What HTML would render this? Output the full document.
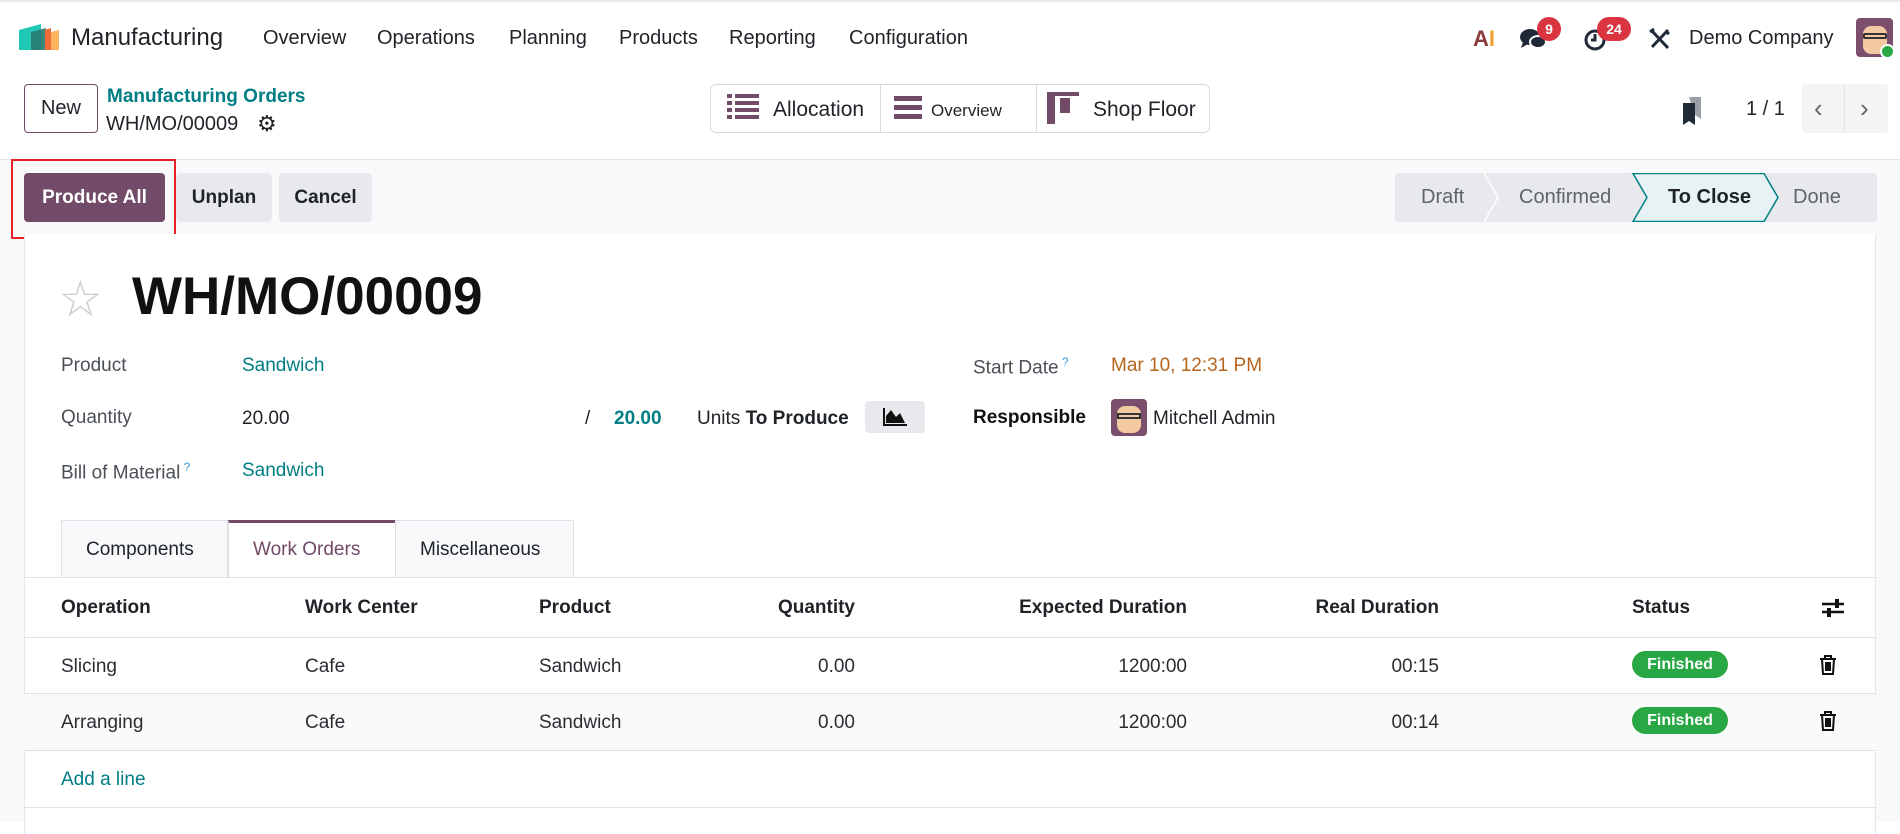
<!DOCTYPE html>
<html><head><meta charset="utf-8"><style>
*{box-sizing:border-box;margin:0;padding:0}
body{width:1900px;height:822px;overflow:hidden;background:#fff;font-family:"Liberation Sans",sans-serif;color:#1f2328;position:relative}
.a{position:absolute;white-space:nowrap}
.nav{font-size:20px;color:#1f2328}
.btn{position:absolute;border-radius:4px;font-size:19px;font-weight:bold;display:flex;align-items:center;justify-content:center}
.lbl{font-size:19px;color:#4b5058}
.val{font-size:19px}
.teal{color:#017e84}
.th{font-size:19px;font-weight:bold}
.td{font-size:19px;color:#2a2e33}
.line{position:absolute;left:24px;width:1852px;height:1px;background:#dee2e6}
.badge{position:absolute;left:1632px;width:96px;height:27px;border-radius:14px;background:#28a745;color:#fff;font-size:16px;font-weight:bold;display:flex;align-items:center;justify-content:center}
</style></head><body>
<div class="a" style="left:0;top:0;width:1900px;height:2px;background:#e9ecef"></div>
<svg class="a" style="left:19px;top:22px" width="42" height="30" viewBox="0 0 42 30"><path d="M0 8 L22 2 L22 28 L0 28Z" fill="#1ec8b4"/><path d="M12 10 L27 6 L27 28 L12 28Z" fill="#2a7a70" opacity=".9"/><path d="M26 8 L32 6 L32 28 L26 28Z" fill="#f26b3a"/><path d="M32 10 L40 8 L40 28 L32 28Z" fill="#fbb45b"/></svg>
<div class="a" style="left:71px;top:24px;font-size:24px;color:#1f2328">Manufacturing</div>
<div class="a nav" style="left:263px;top:27px">Overview</div>
<div class="a nav" style="left:377px;top:27px">Operations</div>
<div class="a nav" style="left:509px;top:27px">Planning</div>
<div class="a nav" style="left:619px;top:27px">Products</div>
<div class="a nav" style="left:729px;top:27px">Reporting</div>
<div class="a nav" style="left:849px;top:27px">Configuration</div>
<div class="a" style="left:1473px;top:26px;font-size:22px;font-weight:bold;color:#8b3a3a">A<span style="color:#f0a030">I</span></div>
<svg class="a" style="left:1519px;top:27px" width="30" height="26" viewBox="0 0 30 26"><ellipse cx="11" cy="10" rx="10" ry="8" fill="#1f2937"/><path d="M4 15 L2 21 L9 17Z" fill="#1f2937"/><ellipse cx="19" cy="15" rx="8" ry="6" fill="#1f2937" stroke="#fff" stroke-width="2"/></svg>
<div class="a" style="left:1537px;top:17px;width:24px;height:24px;border-radius:12px;background:#d9343f;color:#fff;font-size:14px;font-weight:bold;text-align:center;line-height:24px">9</div>
<svg class="a" style="left:1583px;top:28px" width="24" height="24" viewBox="0 0 24 24"><circle cx="12" cy="12" r="9" fill="none" stroke="#1f2937" stroke-width="3"/><path d="M12 6V12H8" stroke="#1f2937" stroke-width="3" fill="none"/></svg>
<div class="a" style="left:1597px;top:17px;width:34px;height:24px;border-radius:12px;background:#d9343f;color:#fff;font-size:14px;font-weight:bold;text-align:center;line-height:24px">24</div>
<svg class="a" style="left:1648px;top:27px" width="24" height="24" viewBox="0 0 24 24"><path d="M4 4L20 21M20 3L4 20M2 5L6 2M17 4L21 7" stroke="#1f2937" stroke-width="3" fill="none"/></svg>
<div class="a nav" style="left:1689px;top:27px">Demo Company</div>
<div class="a" style="left:1856px;top:18px;width:37px;height:39px;border-radius:4px;background:#7a4e6c"><div style="position:absolute;left:7px;top:8px;width:24px;height:28px;border-radius:8px;background:#f2c9a0"></div><div style="position:absolute;left:7px;top:15px;width:24px;height:6px;border:2px solid #333;border-radius:2px"></div></div>
<div class="a" style="left:1880px;top:44px;width:15px;height:15px;border-radius:8px;background:#28a745;border:2px solid #fff"></div>

<div class="btn" style="left:24px;top:84px;width:74px;height:49px;border:1px solid #714b67;font-weight:normal;font-size:20px;color:#1f2328">New</div>
<div class="a teal" style="left:107px;top:86px;font-size:19px;font-weight:bold">Manufacturing Orders</div>
<div class="a" style="left:106px;top:113px;font-size:20px">WH/MO/00009</div>
<div class="a" style="left:257px;top:111px;font-size:22px">⚙</div>
<div class="a" style="left:710px;top:84px;width:500px;height:49px;border:1px solid #d8dadd;border-radius:6px"></div>
<div class="a" style="left:880px;top:85px;width:1px;height:47px;background:#d8dadd"></div>
<div class="a" style="left:1036px;top:85px;width:1px;height:47px;background:#d8dadd"></div>
<svg class="a" style="left:727px;top:94px" width="32" height="26" viewBox="0 0 32 26"><g fill="#714b67"><rect x="0" y="0" width="5" height="4"/><rect x="8" y="0" width="24" height="4"/><rect x="0" y="7" width="5" height="4"/><rect x="8" y="7" width="24" height="4"/><rect x="0" y="14" width="5" height="4"/><rect x="8" y="14" width="24" height="4"/><rect x="0" y="21" width="5" height="4"/><rect x="8" y="21" width="24" height="4"/></g></svg>
<div class="a" style="left:773px;top:98px;font-size:21px">Allocation</div>
<svg class="a" style="left:894px;top:96px" width="28" height="24" viewBox="0 0 28 24"><g fill="#714b67"><rect y="0" width="28" height="5"/><rect y="9" width="28" height="5"/><rect y="18" width="28" height="5"/></g></svg>
<div class="a" style="left:931px;top:101px;font-size:17px">Overview</div>
<svg class="a" style="left:1047px;top:92px" width="32" height="32" viewBox="0 0 32 32"><g fill="#714b67"><rect x="0" y="0" width="32" height="4"/><rect x="0" y="0" width="8" height="32"/><rect x="13" y="6" width="10" height="15"/></g></svg>
<div class="a" style="left:1093px;top:98px;font-size:21px">Shop Floor</div>
<svg class="a" style="left:1681px;top:97px" width="24" height="28" viewBox="0 0 24 28"><path d="M8 0H20V22L14 18Z" fill="#9aa0a6"/><path d="M2 6H14V28L8 24L2 28Z" fill="#1f2937"/></svg>
<div class="a" style="left:1746px;top:98px;font-size:20px">1 / 1</div>
<div class="a" style="left:1802px;top:84px;width:86px;height:49px;background:#f3f4f6;border-radius:4px"></div>
<div class="a" style="left:1844px;top:84px;width:1px;height:49px;background:#e2e4e8"></div>
<div class="a" style="left:1814px;top:93px;font-size:26px;color:#666">‹</div>
<div class="a" style="left:1860px;top:93px;font-size:26px;color:#666">›</div>

<div class="a" style="left:0;top:159px;width:1900px;height:663px;background:#f8f9fa;border-top:1px solid #dee2e6"></div>
<div class="btn" style="left:24px;top:173px;width:141px;height:49px;background:#714b67;color:#fff">Produce All</div>
<div class="a" style="left:11px;top:159px;width:165px;height:80px;border:2px solid #e5202a"></div>
<div class="btn" style="left:176px;top:173px;width:96px;height:49px;background:#e7e9ed">Unplan</div>
<div class="btn" style="left:279px;top:173px;width:93px;height:49px;background:#e7e9ed">Cancel</div>
<svg class="a" style="left:1395px;top:173px" width="482" height="49" viewBox="0 0 482 49"><rect x="0" y="0" width="482" height="49" rx="3" fill="#e7e9ed"/><path d="M89 0L103 24.5L89 49" stroke="#fff" stroke-width="1.5" fill="none"/><path d="M238 0.5H369L383 24.5L369 48.5H238L252 24.5Z" fill="#e6f2f3" stroke="#017e84" stroke-width="1.5"/></svg>
<div class="a" style="left:1421px;top:186px;font-size:20px;color:#5f646b">Draft</div>
<div class="a" style="left:1519px;top:186px;font-size:20px;color:#5f646b">Confirmed</div>
<div class="a" style="left:1668px;top:186px;font-size:20px;font-weight:bold;color:#1f2328">To Close</div>
<div class="a" style="left:1793px;top:186px;font-size:20px;color:#5f646b">Done</div>

<div class="a" style="left:24px;top:234px;width:1852px;height:600px;background:#fff;border-left:1px solid #e5e7ea;border-right:1px solid #e5e7ea"></div>
<div class="a" style="left:58px;top:270px;font-size:50px;color:#c9cdd2">☆</div>
<div class="a" style="left:132px;top:266px;font-size:53px;font-weight:bold;color:#111">WH/MO/00009</div>
<div class="a lbl" style="left:61px;top:355px">Product</div>
<div class="a val teal" style="left:242px;top:355px">Sandwich</div>
<div class="a lbl" style="left:61px;top:407px">Quantity</div>
<div class="a val" style="left:242px;top:408px">20.00</div>
<div class="a val" style="left:585px;top:408px">/</div>
<div class="a val teal" style="left:614px;top:408px;font-weight:bold">20.00</div>
<div class="a val" style="left:697px;top:408px">Units <b>To Produce</b></div>
<div class="a" style="left:865px;top:401px;width:60px;height:32px;background:#e7e9ed;border-radius:4px"></div>
<svg class="a" style="left:883px;top:408px" width="24" height="18" viewBox="0 0 24 18"><path d="M1 0V17H24" stroke="#111" stroke-width="2" fill="none"/><path d="M3 15L3 8L8 2L13 9L17 5L22 15Z" fill="#111"/></svg>
<div class="a lbl" style="left:61px;top:460px">Bill of Material<sup style="font-size:12px;color:#3a9bd8"> ?</sup></div>
<div class="a val teal" style="left:242px;top:460px">Sandwich</div>
<div class="a lbl" style="left:973px;top:355px">Start Date<sup style="font-size:12px;color:#3a9bd8"> ?</sup></div>
<div class="a val" style="left:1111px;top:355px;color:#b7651c">Mar 10, 12:31 PM</div>
<div class="a val" style="left:973px;top:407px;font-weight:bold;color:#111">Responsible</div>
<div class="a" style="left:1111px;top:399px;width:36px;height:37px;border-radius:4px;background:#7a4e6c"><div style="position:absolute;left:6px;top:7px;width:24px;height:27px;border-radius:8px;background:#f2c9a0"></div><div style="position:absolute;left:6px;top:14px;width:24px;height:6px;border:2px solid #333"></div></div>
<div class="a val" style="left:1153px;top:408px">Mitchell Admin</div>

<div class="a" style="left:61px;top:520px;width:167px;height:57px;background:#f8f9fa;border:1px solid #dee2e6;border-bottom:none"></div>
<div class="a" style="left:228px;top:520px;width:168px;height:58px;background:#fff;border:1px solid #dee2e6;border-top:3px solid #714b67;border-bottom:none"></div>
<div class="a" style="left:395px;top:520px;width:179px;height:57px;background:#f8f9fa;border:1px solid #dee2e6;border-bottom:none"></div>
<div class="a" style="left:86px;top:539px;font-size:19px">Components</div>
<div class="a" style="left:253px;top:539px;font-size:19px;color:#714b67">Work Orders</div>
<div class="a" style="left:420px;top:539px;font-size:19px">Miscellaneous</div>
<div class="line" style="top:577px"></div>

<div class="a th" style="left:61px;top:597px">Operation</div>
<div class="a th" style="left:305px;top:597px">Work Center</div>
<div class="a th" style="left:539px;top:597px">Product</div>
<div class="a th" style="right:1045px;top:597px">Quantity</div>
<div class="a th" style="right:713px;top:597px">Expected Duration</div>
<div class="a th" style="right:461px;top:597px">Real Duration</div>
<div class="a th" style="left:1632px;top:597px">Status</div>
<svg class="a" style="left:1822px;top:597px" width="22" height="22" viewBox="0 0 22 22"><path d="M0 7H22M0 15H22" stroke="#111" stroke-width="2.5"/><rect x="13" y="2" width="4" height="9" fill="#111"/><rect x="5" y="11" width="4" height="9" fill="#111"/></svg>
<div class="line" style="top:637px"></div>
<div class="a" style="left:24px;top:694px;width:1852px;height:56px;background:#fafafa"></div>
<div class="a td" style="left:61px;top:656px">Slicing</div>
<div class="a td" style="left:305px;top:656px">Cafe</div>
<div class="a td" style="left:539px;top:656px">Sandwich</div>
<div class="a td" style="right:1045px;top:656px">0.00</div>
<div class="a td" style="right:713px;top:656px">1200:00</div>
<div class="a td" style="right:461px;top:656px">00:15</div>
<div class="badge" style="top:651px">Finished</div>
<svg class="a" style="left:1819px;top:655px" width="18" height="20" viewBox="0 0 18 20"><path d="M1 4H17M6 4V1H12V4M3 4L4 19H14L15 4M7 7V16M9 7V16M11 7V16" stroke="#111" stroke-width="2" fill="none"/></svg>
<div class="line" style="top:693px"></div>
<div class="a td" style="left:61px;top:712px">Arranging</div>
<div class="a td" style="left:305px;top:712px">Cafe</div>
<div class="a td" style="left:539px;top:712px">Sandwich</div>
<div class="a td" style="right:1045px;top:712px">0.00</div>
<div class="a td" style="right:713px;top:712px">1200:00</div>
<div class="a td" style="right:461px;top:712px">00:14</div>
<div class="badge" style="top:707px">Finished</div>
<svg class="a" style="left:1819px;top:711px" width="18" height="20" viewBox="0 0 18 20"><path d="M1 4H17M6 4V1H12V4M3 4L4 19H14L15 4M7 7V16M9 7V16M11 7V16" stroke="#111" stroke-width="2" fill="none"/></svg>
<div class="line" style="top:750px"></div>
<div class="a" style="left:61px;top:769px;font-size:19px;color:#017e84">Add a line</div>
<div class="line" style="top:807px"></div>
</body></html>
